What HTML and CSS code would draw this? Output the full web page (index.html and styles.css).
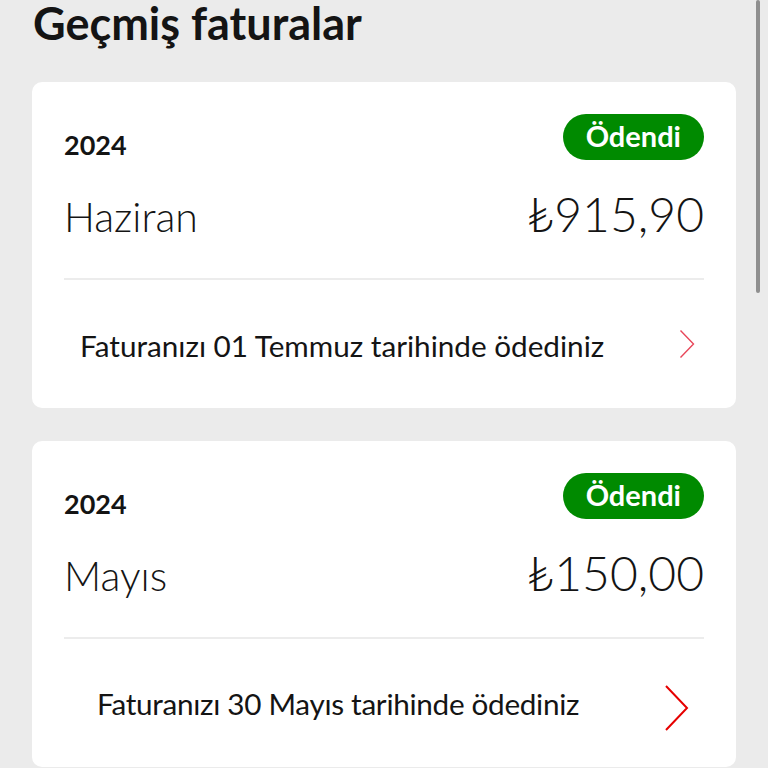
FILE: index.html
```html
<!DOCTYPE html>
<html lang="tr">
<head>
<meta charset="utf-8">
<link rel="stylesheet" href="styles.css">
</head>
<body>
<div class="page">
  <h1 class="title">Geçmiş faturalar</h1>
  <div class="card">
    <div class="card-head">
      <div class="year">2024</div>
      <div class="badge">Ödendi</div>
    </div>
    <div class="card-main">
      <div class="month">Haziran</div>
      <div class="amount">₺915,90</div>
    </div>
    <div class="divider"></div>
    <div class="row row-a">
      <span class="row-text">Faturanızı 01 Temmuz tarihinde ödediniz</span>
      <svg class="chev chev-a" viewBox="0 0 16 30" width="16" height="30"><path d="M1.5 1.5 L14.5 15 L1.5 28.5" fill="none" stroke="#e8475a" stroke-width="1.4"/></svg>
    </div>
  </div>
  <div class="card">
    <div class="card-head">
      <div class="year">2024</div>
      <div class="badge">Ödendi</div>
    </div>
    <div class="card-main">
      <div class="month">Mayıs</div>
      <div class="amount">₺150,00</div>
    </div>
    <div class="divider"></div>
    <div class="row row-b">
      <span class="row-text">Faturanızı 30 Mayıs tarihinde ödediniz</span>
      <svg class="chev chev-b" viewBox="0 0 26 48" width="26" height="48"><path d="M2 2 L23 24 L2 46" fill="none" stroke="#e60000" stroke-width="2"/></svg>
    </div>
  </div>
</div>
<div class="scrollbar"></div>
</body>
</html>
```
FILE: styles.css
```css
html, body {
  margin: 0;
  padding: 0;
  background: #ebebeb;
  font-family: Lato, "Noto Sans", sans-serif;
  color: #141414;
  overflow: hidden;
  height: 768px;
}
.page {
  padding: 0 32px;
  width: 704px;
}
.title {
  margin: 0;
  font-size: 45px;
  font-weight: 700;
  line-height: 46px;
  padding-left: 1px;
  height: 82px;
}
.card {
  background: #fff;
  border-radius: 10px;
  padding: 0 32px;
  margin-bottom: 33px;
}
.card-head {
  display: flex;
  justify-content: space-between;
  align-items: center;
  padding-top: 32px;
  height: 46px;
}
.year {
  font-size: 27px;
  font-weight: 700;
  padding-top: 14px;
}
.badge {
  background: #008a00;
  color: #fff;
  font-weight: 700;
  font-size: 29px;
  height: 46px;
  line-height: 44px;
  padding: 0 23px;
  border-radius: 23px;
}
.card-main {
  display: flex;
  justify-content: space-between;
  align-items: baseline;
  height: 118px;
  line-height: 1;
}
.month {
  font-size: 41px;
  font-weight: 300;
  margin-top: 30px;
}
.amount {
  font-size: 48px;
  font-weight: 300;
  margin-top: 30px;
}
.divider {
  height: 2px;
  background: #ececec;
}
.row {
  display: flex;
  justify-content: space-between;
  align-items: center;
  height: 128px;
}
.row-text {
  font-size: 29.7px;
  font-weight: 400;
}
.row-a {
  padding-left: 16px;
  padding-right: 9px;
}
.row-a .row-text {
  padding-top: 2px;
}
.row-b {
  padding-left: 33px;
  padding-right: 14px;
}
.row-b .row-text {
  letter-spacing: -0.3px;
}
.chev-b {
  margin-top: 10px;
}
.scrollbar {
  position: absolute;
  left: 756px;
  top: 0;
  width: 4px;
  height: 293px;
  border-radius: 2px;
  background: #8f8f8f;
}
```
